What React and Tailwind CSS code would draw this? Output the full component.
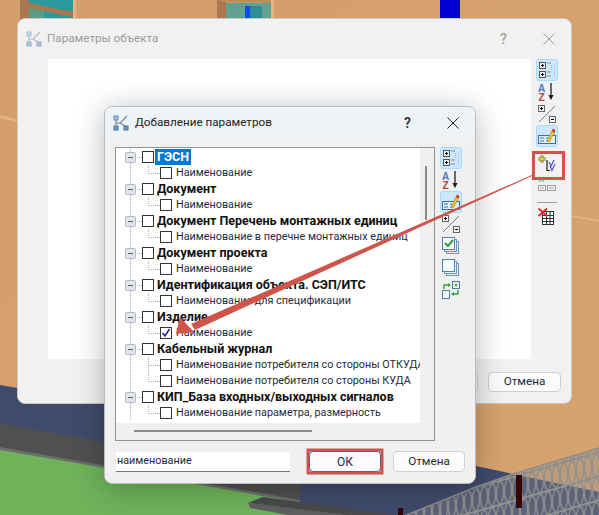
import React from "react";

const font = "font-['Roboto',sans-serif]";

const rows = [
  ["ГЭСН", "Наименование"],
  ["Документ", "Наименование"],
  ["Документ Перечень монтажных единиц", "Наименование в перечне монтажных единиц"],
  ["Документ проекта", "Наименование"],
  ["Идентификация объекта. СЭП/ИТС", "Наименование для спецификации"],
  ["Изделие", "Наименование"],
  ["Кабельный журнал", "Наименование потребителя со стороны ОТКУДА", "Наименование потребителя со стороны КУДА"],
  ["КИП_База входных/выходных сигналов", "Наименование параметра, размерность"],
];

function Scene() {
  return (
    <svg className="absolute inset-0" width="599" height="515" viewBox="0 0 599 515">
      <defs>
        <linearGradient id="wall" x1="0" y1="0" x2="1" y2="1">
          <stop offset="0" stopColor="#d39e6a" />
          <stop offset="1" stopColor="#d6a36f" />
        </linearGradient>
        <pattern id="mesh" width="8" height="24" patternUnits="userSpaceOnUse" patternTransform="skewY(-16)">
          <ellipse cx="4" cy="12" rx="3.6" ry="11" fill="none" stroke="#8f8f8f" strokeWidth="1.3" />
          <path d="M0 0H8M0 24H8" stroke="#8f8f8f" strokeWidth="2" />
        </pattern>
      </defs>
      <rect width="599" height="515" fill="url(#wall)" />
      <path d="M0 115L17 119V122L0 118ZM572 215L599 220V222L572 217Z" fill="#e2b184" />

      {/* windows on the top edge */}
      <rect x="20" y="0" width="9" height="20" fill="#a9784f" />
      <rect x="29" y="0" width="44" height="20" fill="#2c9a9c" />
      <rect x="29" y="8" width="15" height="12" fill="#5a9c88" />
      <path d="M29 3L73 12V17L29 8Z" fill="#a9784f" />
      <rect x="73" y="0" width="3" height="20" fill="#eab184" />
      <rect x="217" y="0" width="9" height="20" fill="#a9784f" />
      <rect x="226" y="3" width="45" height="17" fill="#5fa291" />
      <rect x="245" y="6" width="5" height="14" fill="#0a50d8" />
      <rect x="250" y="6" width="12" height="14" fill="#2c8d96" />
      <path d="M217 0H272V3L226 2Z" fill="#c08a5c" />
      <rect x="271" y="0" width="3" height="20" fill="#eab184" />
      <rect x="440" y="0" width="20" height="20" fill="#0000d2" />

      {/* floor */}
      <path d="M0 385L476 466L513 474L599 492V515H0Z" fill="#3f4b6b" />
      <path d="M0 423L300 478V515H0Z" fill="#505050" />
      <path d="M0 447L300 500V515H0Z" fill="#6d6d6d" />
      <path d="M0 450L105 468L420 524H0Z" fill="#6fb35b" />
      <path d="M248 503L263 497L416 518H360Z" fill="#4a4a4a" />
      <path d="M248 503L250 508L370 530L390 520Z" fill="#5f5f5f" />

      {/* fence */}
      <path d="M382 525L513 474L599 448V515H400Z" fill="#8f8f8f" fillOpacity="0.35" />
      <path d="M382 525L513 474L599 448V515H400Z" fill="url(#mesh)" />
      <path d="M382 525L476 487L513 474L599 448" fill="none" stroke="#8f8f8f" strokeWidth="1.5" />
      <rect x="516" y="475" width="6" height="33" fill="#360606" />
      <rect x="398" y="508" width="5" height="7" fill="#360606" />
    </svg>
  );
}

function WindowIcon({ dim }) {
  return (
    <svg width="16" height="16" viewBox="0 0 16 16" fill="none" className={dim ? "opacity-50" : ""}>
      <path d="M3 5V10M3 8H7L14 1M7 8L12 11" stroke="#74828f" strokeWidth="1.1" />
      <rect x="1" y="1" width="4" height="4" fill="#9cc0e4" stroke="#5a8fc6" />
      <rect x="1" y="11" width="4" height="4" fill="#6f9cc9" stroke="#47729e" />
      <rect x="11" y="11" width="4" height="4" fill="#6f9cc9" stroke="#47729e" />
    </svg>
  );
}

function ExpandIcon() {
  return (
    <svg width="18" height="18" viewBox="0 0 18 18" fill="none">
      <rect x="1.5" y="1.5" width="6" height="6" fill="#eee" stroke="#555" />
      <path d="M3 4.5H6M4.5 3V6" stroke="#000" />
      <rect x="1.5" y="10.5" width="6" height="6" fill="#eee" stroke="#555" />
      <path d="M3 13.5H6M4.5 12V15" stroke="#000" />
      <path d="M9 2H13M9 11H13M9 15H13" stroke="#888" />
      <path d="M13.5 4V9M16.5 4V9M16.5 11V16" stroke="#9db4cc" strokeDasharray="1 1" />
    </svg>
  );
}

function SortIcon() {
  return (
    <svg width="18" height="18" viewBox="0 0 18 18" fill="none">
      <text x="0" y="8.5" fontSize="10" fontWeight="700" fill="#4a78c4" fontFamily="Liberation Sans">A</text>
      <text x="0.5" y="17.5" fontSize="10" fontWeight="700" fill="#ad4646" fontFamily="Liberation Sans">Z</text>
      <path d="M13 0V14" stroke="#111" strokeWidth="1.2" />
      <path d="M10.5 12L13 17L15.5 12Z" fill="#111" />
    </svg>
  );
}

function PlusMinusIcon() {
  return (
    <svg width="18" height="18" viewBox="0 0 18 18" fill="none">
      <path d="M1 17L17 1" stroke="#808080" />
      <rect x="0.5" y="0.5" width="6" height="6" fill="#f4f4f4" stroke="#666" />
      <path d="M2 3.5H5M3.5 2V5" stroke="#000" />
      <rect x="11.5" y="11.5" width="6" height="6" fill="#f4f4f4" stroke="#666" />
      <path d="M13 14.5H16" stroke="#000" />
    </svg>
  );
}

function EditIcon() {
  return (
    <svg width="18" height="18" viewBox="0 0 18 18" fill="none">
      <rect x="0.5" y="8.5" width="17" height="8" fill="#dff0fb" stroke="#3a6ea5" />
      <path d="M2 11H6M2 14H6M8 11H10M8 14H9" stroke="#3a6ea5" />
      <path d="M9 14L14 4L16.5 5.5L11 15Z" fill="#f2cf1d" stroke="#8a6d10" strokeWidth="0.6" />
      <path d="M14 4L15 1.5L17.3 3L16.5 5.5Z" fill="#d92a2a" />
    </svg>
  );
}

function CheckStackIcon() {
  return (
    <svg width="18" height="18" viewBox="0 0 18 18" fill="none">
      <rect x="4.5" y="4.5" width="12" height="12" fill="#e8f1fa" stroke="#6a94bd" />
      <rect x="2.5" y="2.5" width="12" height="12" fill="#e8f1fa" stroke="#6a94bd" />
      <rect x="0.5" y="0.5" width="12" height="12" fill="#f6fafd" stroke="#4f80b0" />
      <path d="M3 6L6 9L11 3" stroke="#2f9e35" strokeWidth="2" />
    </svg>
  );
}

function StackIcon() {
  return (
    <svg width="18" height="18" viewBox="0 0 18 18" fill="none">
      <rect x="4.5" y="4.5" width="12" height="12" fill="#e8f1fa" stroke="#6a94bd" />
      <rect x="2.5" y="2.5" width="12" height="12" fill="#e8f1fa" stroke="#6a94bd" />
      <rect x="0.5" y="0.5" width="12" height="12" fill="#f6fafd" stroke="#4f80b0" />
    </svg>
  );
}

function SwapIcon() {
  return (
    <svg width="18" height="18" viewBox="0 0 18 18" fill="none">
      <rect x="10.5" y="0.5" width="7" height="7" fill="#f2f7fb" stroke="#4f80b0" />
      <path d="M12.5 2.5L15.5 5.5M15.5 2.5L12.5 5.5" stroke="#2f9e35" />
      <rect x="0.5" y="9.5" width="7" height="8" fill="#f2f7fb" stroke="#4f80b0" />
      <path d="M2 8V4H7" stroke="#2f9e35" strokeWidth="1.4" />
      <path d="M6 2L9 4L6 6Z" fill="#2f9e35" />
      <path d="M16 9V13H11" stroke="#2f9e35" strokeWidth="1.4" />
      <path d="M12 11L9 13L12 15Z" fill="#2f9e35" />
    </svg>
  );
}

function AddIcon() {
  return (
    <svg width="18" height="18" viewBox="0 0 18 18" fill="none">
      <path d="M0.5 5H7.5M4 1.5V8.5" stroke="#6d6a1d" strokeWidth="3" />
      <path d="M1 5H7M4 2V8" stroke="#f2e23c" strokeWidth="1.3" />
      <path d="M9 6V16.5H12" stroke="#222" strokeWidth="1.2" />
      <path d="M11 8L13 12L16 6M12 12L14 16.5L17 10" stroke="#3b49e0" strokeWidth="1.1" />
    </svg>
  );
}

function RemoveIcon() {
  return (
    <svg width="18" height="18" viewBox="0 0 18 18" fill="none">
      <path d="M1 1L6 6M6 1L1 6" stroke="#a8a8a8" strokeWidth="1.3" />
      <rect x="0.5" y="9.5" width="7" height="5" fill="#f2f2f2" stroke="#a0a0a0" />
      <rect x="9.5" y="9.5" width="8" height="5" fill="#f2f2f2" stroke="#a0a0a0" />
      <path d="M2 12H6M11 12H16" stroke="#a0a0a0" />
    </svg>
  );
}

function DeleteIcon() {
  return (
    <svg width="18" height="18" viewBox="0 0 18 18" fill="none">
      <rect x="4.5" y="3.5" width="11" height="13" fill="#fff" stroke="#333" />
      <path d="M4 7.5H15M4 10.5H15M4 13.5H15M8.5 4V16M12 4V16" stroke="#333" />
      <path d="M0.5 0.5L9 8M9 0.5L0.5 8" stroke="#e02020" strokeWidth="1.8" />
    </svg>
  );
}

function ToolBtn({ active, className = "", children }) {
  return (
    <div
      className={`flex h-[22px] w-[22px] items-center justify-center rounded-[3px] border ${
        active ? "border-[#a8d8fc] bg-[#cce8ff]" : "border-transparent"
      } ${className}`}
    >
      {children}
    </div>
  );
}

function CloseX({ color }) {
  return (
    <svg width="12" height="12" viewBox="0 0 12 12">
      <path d="M0.5 0.5L11.5 11.5M11.5 0.5L0.5 11.5" stroke={color} strokeWidth="1" />
    </svg>
  );
}

function Checkbox({ checked }) {
  return (
    <div className="flex h-3 w-3 shrink-0 items-center justify-center border border-[#333] bg-white">
      {checked && (
        <svg width="10" height="10" viewBox="0 0 10 10">
          <path d="M1.5 5L4 8L8.5 1" stroke="#1c1c9c" strokeWidth="1.5" fill="none" />
        </svg>
      )}
    </div>
  );
}

function GroupRow({ label, selected }) {
  return (
    <div className="flex h-4 items-center">
      <svg width="26" height="16" viewBox="0 0 26 16" className="shrink-0">
        <path d="M14.5 0V16" stroke="#aaa" strokeDasharray="1 1" />
        <path d="M19 8.5H26" stroke="#aaa" strokeDasharray="1 1" />
        <rect x="9.5" y="3.5" width="10" height="10" rx="1" fill="#e3e6ea" stroke="#b4bac1" />
        <path d="M12 8.5H17" stroke="#555b66" />
      </svg>
      <Checkbox />
      <span
        className={`ml-px px-0.5 text-[12.5px] leading-4 font-bold ${
          selected ? "bg-[#0078d7] text-white" : "text-[#111]"
        }`}
      >
        {label}
      </span>
    </div>
  );
}

function ChildRow({ label, checked, last }) {
  return (
    <div className="flex h-4 items-center">
      <svg width="44" height="16" viewBox="0 0 44 16" className="shrink-0">
        <path d="M14.5 0V16" stroke="#aaa" strokeDasharray="1 1" />
        <path d={last ? "M32.5 0V8.5" : "M32.5 0V16"} stroke="#aaa" strokeDasharray="1 1" />
        <path d="M33 8.5H44" stroke="#aaa" strokeDasharray="1 1" />
      </svg>
      <Checkbox checked={checked} />
      <span className="ml-1 text-[10.8px] leading-4 text-[#1c2b3c]">{label}</span>
    </div>
  );
}

function BackWindow() {
  return (
    <div className="absolute left-[17px] top-[18px] flex h-[386px] w-[555px] flex-col rounded-lg border border-[#c9c9c9] bg-[#f1f1f1]">
      <div className="flex h-[40px] items-center pl-[8px] pr-[16px]">
        <WindowIcon dim />
        <span className="ml-[5px] text-[11.7px] text-[#9a9a9a]">Параметры объекта</span>
        <span className="ml-auto text-[14px] font-semibold text-[#a8a8a8]">?</span>
        <div className="ml-[36px]">
          <CloseX color="#9a9a9a" />
        </div>
      </div>
      <div className="flex pl-[30px]">
        <div className="h-[300px] w-[483px] bg-white" />
        <div className="ml-[5px] flex flex-col">
          <ToolBtn active><ExpandIcon /></ToolBtn>
          <ToolBtn><SortIcon /></ToolBtn>
          <ToolBtn><PlusMinusIcon /></ToolBtn>
          <ToolBtn active><EditIcon /></ToolBtn>
          <ToolBtn className="mt-[5px]"><AddIcon /></ToolBtn>
          <ToolBtn><RemoveIcon /></ToolBtn>
          <div className="mx-[1px] mt-[6px] h-px bg-[#a0a0a0]" />
          <ToolBtn className="mt-[3px]"><DeleteIcon /></ToolBtn>
        </div>
      </div>
      <div className="mt-[13px] flex justify-end gap-[10px] pr-[10px]">
        <div className="flex h-[20px] w-[73px] items-center justify-center rounded border border-[#d0d0d0] bg-[#fbfbfb] text-[12px]">OK</div>
        <div className="flex h-[20px] w-[73px] items-center justify-center rounded border border-[#d0d0d0] bg-[#fbfbfb] text-[11.7px] text-[#1c2b3c]">Отмена</div>
      </div>
    </div>
  );
}

function Dialog() {
  return (
    <div className="absolute left-[104px] top-[106px] flex h-[378px] w-[372px] flex-col overflow-hidden rounded-lg border border-[#bcbcbc] bg-[#f0f0f0] shadow-[0_4px_30px_rgba(0,0,0,0.28)]">
      <div className="flex h-[32px] shrink-0 items-center bg-[#eef3f8] pl-[8px] pr-[16px]">
        <WindowIcon />
        <span className="ml-[6px] text-[11.7px] text-[#222]">Добавление параметров</span>
        <span className="ml-auto text-[14px] font-semibold text-[#333]">?</span>
        <div className="ml-[36px]">
          <CloseX color="#222" />
        </div>
      </div>
      <div className="mt-[8px] flex pl-[10px]">
        <div className="relative h-[294px] w-[320px] border border-[#8f9498] bg-[#f0f0f0]">
          <div className="h-[275px] w-[304px] overflow-hidden whitespace-nowrap bg-white pt-px">
            {rows.map(([group, ...children], i) => (
              <React.Fragment key={group}>
                <GroupRow label={group} selected={i === 0} />
                {children.map((child, j) => (
                  <ChildRow
                    key={child}
                    label={child}
                    checked={i === 5}
                    last={j === children.length - 1}
                  />
                ))}
              </React.Fragment>
            ))}
          </div>
          {/* scrollbars */}
          <div className="absolute left-[309px] top-[18px] h-[54px] w-[2px] bg-[#8a8a8a]" />
          <div className="absolute left-[18px] top-[282px] h-[2px] w-[178px] bg-[#8a8a8a]" />
        </div>
        <div className="ml-[5px] flex flex-col">
          <ToolBtn active><ExpandIcon /></ToolBtn>
          <ToolBtn><SortIcon /></ToolBtn>
          <ToolBtn active><EditIcon /></ToolBtn>
          <ToolBtn><PlusMinusIcon /></ToolBtn>
          <ToolBtn><CheckStackIcon /></ToolBtn>
          <ToolBtn><StackIcon /></ToolBtn>
          <ToolBtn><SwapIcon /></ToolBtn>
        </div>
      </div>
      <div className="mt-[10px] flex items-center pl-[11px]">
        <div className="flex h-[20px] w-[174px] items-center border-b border-[#777] bg-white pl-px text-[10.8px] text-[#1c2b3c]">
          наименование
        </div>
        <div className="ml-[19px] flex h-[21px] w-[72px] items-center justify-center rounded border border-[#0067c0] bg-[#fbfbfb] text-[12px] text-[#1c2b3c]">
          ОК
        </div>
        <div className="ml-[12px] flex h-[21px] w-[72px] items-center justify-center rounded border border-[#d0d0d0] bg-[#fbfbfb] text-[11.7px] text-[#1c2b3c]">
          Отмена
        </div>
      </div>
    </div>
  );
}

export default function App() {
  return (
    <div className={`relative h-[515px] w-[599px] overflow-hidden ${font}`}>
      <Scene />
      <BackWindow />
      <Dialog />
      {/* red annotations on top of the screenshot */}
      <svg className="pointer-events-none absolute inset-0" width="599" height="515" viewBox="0 0 599 515" fill="none">
        <rect x="308" y="450" width="74" height="23" stroke="#cf5449" strokeWidth="3" />
        <rect x="533.5" y="152.5" width="30" height="26" stroke="#cf5449" strokeWidth="3" />
        <path d="M533 174.5L533 175.5L195 330L191 324Z" fill="#cf5449" />
        <path d="M176 334L180 317L194 332Z" fill="#cf5449" />
      </svg>
    </div>
  );
}
